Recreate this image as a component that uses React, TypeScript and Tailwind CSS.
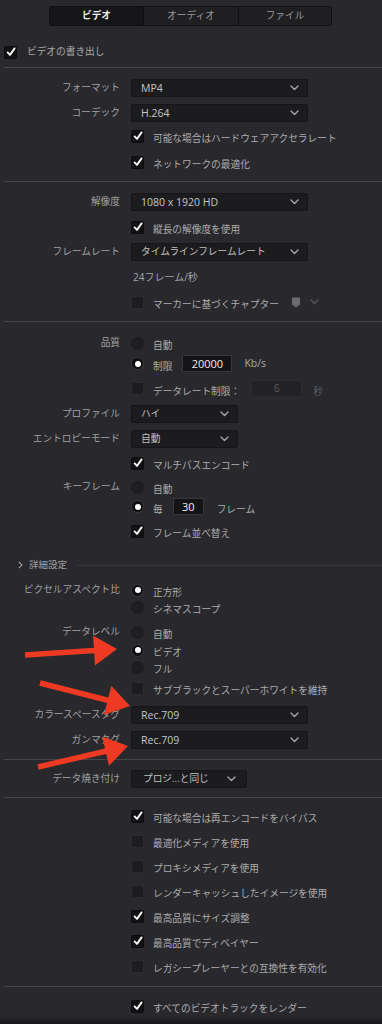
import React from "react";

function Check({ checked }: { checked?: boolean }) {
  return (
    <div
      className={
        checked
          ? "w-[13px] h-[13px] shrink-0 rounded-[2px] bg-[#121214] border border-[#0c0c0e] flex items-center justify-center"
          : "w-[13px] h-[13px] shrink-0 rounded-[2px] bg-[#1d1d20] border border-[#2c2c30]"
      }
    >
      {checked && (
        <svg width="10" height="10" viewBox="0 0 10 10">
          <path d="M1.6 5.4 L4 7.9 L8.6 1.4" stroke="#f4f4f4" strokeWidth="1.9" fill="none" strokeLinecap="round" strokeLinejoin="round" />
        </svg>
      )}
    </div>
  );
}

function Radio({ on }: { on?: boolean }) {
  return (
    <div
      className={
        on
          ? "w-[13px] h-[13px] shrink-0 rounded-full bg-[#0f0f11] border border-[#3a3a3f] flex items-center justify-center"
          : "w-[13px] h-[13px] shrink-0 rounded-full bg-[#1e1e21]"
      }
    >
      {on && <div className="w-[6px] h-[6px] rounded-full bg-white" />}
    </div>
  );
}

function Chevron({ color = "#a0a0a0" }: { color?: string }) {
  return (
    <svg width="9" height="6" viewBox="0 0 9 6">
      <path d="M1 1 L4.5 4.6 L8 1" stroke={color} strokeWidth="1.4" fill="none" strokeLinecap="round" strokeLinejoin="round" />
    </svg>
  );
}

function Dropdown({ w, value }: { w: string; value: string }) {
  return (
    <div className={`${w} h-[18px] bg-[#1c1c1f] border border-[#151517] rounded-[2px] flex items-center justify-between pl-[9px] pr-[8px]`}>
      <span className="text-[10.5px] leading-none text-[#c6c6c6] whitespace-nowrap">{value}</span>
      <Chevron />
    </div>
  );
}

function Row({ mt, h, label, children }: { mt: string; h: string; label?: string; children?: React.ReactNode }) {
  return (
    <div className={`flex items-center ${mt} ${h}`}>
      <div className="w-[120px] shrink-0 text-right text-[#a0a0a0] text-[9.7px] leading-none whitespace-nowrap">{label}</div>
      <div className="ml-[11px] flex items-center">{children}</div>
    </div>
  );
}

function T({ children, c = "text-[#acacac]" }: { children: React.ReactNode; c?: string }) {
  return <span className={`${c} text-[9.7px] leading-none whitespace-nowrap`}>{children}</span>;
}

function Sep({ mt }: { mt: string }) {
  return <div className={`${mt} h-px ml-[4px] bg-[#45454b]`} />;
}

function arrowPoints(x1: number, y1: number, x2: number, y2: number, sw = 5.5, hl = 23, hw = 30) {
  const dx = x2 - x1;
  const dy = y2 - y1;
  const L = Math.sqrt(dx * dx + dy * dy);
  const ux = dx / L;
  const uy = dy / L;
  const px = -uy;
  const py = ux;
  const bx = x2 - ux * hl;
  const by = y2 - uy * hl;
  const pts = [
    [x1 + (px * sw) / 2, y1 + (py * sw) / 2],
    [bx + (px * sw) / 2, by + (py * sw) / 2],
    [bx + (px * hw) / 2, by + (py * hw) / 2],
    [x2, y2],
    [bx - (px * hw) / 2, by - (py * hw) / 2],
    [bx - (px * sw) / 2, by - (py * sw) / 2],
    [x1 - (px * sw) / 2, y1 - (py * sw) / 2],
  ];
  return pts.map((p) => `${p[0].toFixed(1)},${p[1].toFixed(1)}`).join(" ");
}

export default function App() {
  return (
    <div className="relative w-[382px] h-[1024px] overflow-hidden bg-[#28282d] flex flex-col [font-family:'Open_Sans','Noto_Sans_CJK_JP',sans-serif]">
      {/* Tabs */}
      <div className="mt-[6px] ml-[49px] w-[283px] h-[20px] flex bg-[#1f1f22] border border-[#111113] rounded-[2px]">
        <div className="w-[94px] h-full bg-[#161618] flex items-center justify-center border-r border-[#0e0e10]">
          <span className="text-[9.7px] leading-none text-[#f0f0f0] font-semibold">ビデオ</span>
        </div>
        <div className="w-[95px] h-full flex items-center justify-center border-r border-[#121214]">
          <span className="text-[9.7px] leading-none text-[#9a9a9e]">オーディオ</span>
        </div>
        <div className="flex-1 h-full flex items-center justify-center">
          <span className="text-[9.7px] leading-none text-[#9a9a9e]">ファイル</span>
        </div>
      </div>

      <div className="mt-[19px] h-[14px] flex items-center pl-[4px]">
        <Check checked />
        <span className="ml-[10px] text-[9.7px] leading-none text-[#a8a8a8]">ビデオの書き出し</span>
      </div>
      <Sep mt="mt-[8px]" />

      <Row mt="mt-[11px]" h="h-[18px]" label="フォーマット">
        <Dropdown w="w-[177px]" value="MP4" />
      </Row>
      <Row mt="mt-[7px]" h="h-[18px]" label="コーデック">
        <Dropdown w="w-[177px]" value="H.264" />
      </Row>
      <Row mt="mt-[7px]" h="h-[14px]">
        <Check checked />
        <span className="ml-[9px]"><T>可能な場合はハードウェアアクセラレート</T></span>
      </Row>
      <Row mt="mt-[12px]" h="h-[14px]">
        <Check checked />
        <span className="ml-[9px]"><T>ネットワークの最適化</T></span>
      </Row>
      <Sep mt="mt-[12px]" />

      <Row mt="mt-[11px]" h="h-[18px]" label="解像度">
        <Dropdown w="w-[177px]" value="1080 x 1920 HD" />
      </Row>
      <Row mt="mt-[9px]" h="h-[14px]">
        <Check checked />
        <span className="ml-[9px]"><T>縦長の解像度を使用</T></span>
      </Row>
      <Row mt="mt-[9px]" h="h-[18px]" label="フレームレート">
        <div className="w-[177px] h-[18px] bg-[#1c1c1f] border border-[#151517] rounded-[2px] flex items-center justify-between pl-[9px] pr-[8px]">
          <span className="text-[9.7px] leading-none text-[#c0c0c0] whitespace-nowrap">タイムラインフレームレート</span>
          <Chevron />
        </div>
      </Row>
      <Row mt="mt-[9px]" h="h-[14px]">
        <span className="ml-[2px] text-[10px] leading-none text-[#a4a4a4]">24フレーム/秒</span>
      </Row>
      <Row mt="mt-[11px]" h="h-[14px]">
        <Check />
        <span className="ml-[9px]"><T>マーカーに基づくチャプター</T></span>
        <svg className="ml-[12px]" width="10" height="11" viewBox="0 0 10 11">
          <path d="M1 1.5 Q1 0.5 2 0.5 L8 0.5 Q9 0.5 9 1.5 L9 7.5 L5 10.5 L1 7.5 Z" fill="#6a6a70" />
        </svg>
        <span className="ml-[9px]"><Chevron color="#55555b" /></span>
      </Row>
      <Sep mt="mt-[12px]" />

      <Row mt="mt-[14px]" h="h-[14px]" label="品質">
        <Radio />
        <span className="ml-[9px]"><T>自動</T></span>
      </Row>
      <Row mt="mt-[5px]" h="h-[17px]">
        <Radio on />
        <span className="ml-[9px]"><T>制限</T></span>
        <div className="ml-[10px] w-[50px] h-[17px] bg-[#141416] border border-[#37373c] rounded-[1px] flex items-center justify-center">
          <span className="text-[11px] leading-none text-[#eeeeee]">20000</span>
        </div>
        <span className="ml-[12px] text-[10.5px] leading-none text-[#a8a8a8]">Kb/s</span>
      </Row>
      <Row mt="mt-[8px]" h="h-[17px]">
        <Check />
        <span className="ml-[9px]"><T>データレート制限：</T></span>
        <div className="ml-[11px] w-[51px] h-[17px] bg-[#222225] border border-[#2c2c30] rounded-[1px] flex items-center justify-center">
          <span className="text-[10.5px] leading-none text-[#5e5e62]">6</span>
        </div>
        <span className="ml-[11px]"><T c="text-[#5e5e62]">秒</T></span>
      </Row>
      <Row mt="mt-[8px]" h="h-[18px]" label="プロファイル">
        <div className="w-[107px] h-[18px] bg-[#1c1c1f] border border-[#151517] rounded-[2px] flex items-center justify-between pl-[9px] pr-[8px]">
          <span className="text-[9.7px] leading-none text-[#c0c0c0]">ハイ</span>
          <Chevron />
        </div>
      </Row>
      <Row mt="mt-[7px]" h="h-[18px]" label="エントロピーモード">
        <div className="w-[107px] h-[18px] bg-[#1c1c1f] border border-[#151517] rounded-[2px] flex items-center justify-between pl-[9px] pr-[8px]">
          <span className="text-[9.7px] leading-none text-[#c0c0c0]">自動</span>
          <Chevron />
        </div>
      </Row>
      <Row mt="mt-[8px]" h="h-[14px]">
        <Check checked />
        <span className="ml-[9px]"><T>マルチパスエンコード</T></span>
      </Row>
      <Row mt="mt-[10px]" h="h-[14px]" label="キーフレーム">
        <Radio />
        <span className="ml-[9px]"><T>自動</T></span>
      </Row>
      <Row mt="mt-[4px]" h="h-[17px]">
        <Radio on />
        <span className="ml-[9px]"><T>毎</T></span>
        <div className="ml-[10px] w-[31px] h-[17px] bg-[#141416] border border-[#37373c] rounded-[1px] flex items-center justify-center">
          <span className="text-[11px] leading-none text-[#eeeeee]">30</span>
        </div>
        <span className="ml-[13px]"><T>フレーム</T></span>
      </Row>
      <Row mt="mt-[9px]" h="h-[14px]">
        <Check checked />
        <span className="ml-[9px]"><T>フレーム並べ替え</T></span>
      </Row>

      {/* 詳細設定 */}
      <div className="mt-[20px] h-[14px] flex items-center pl-[18px]">
        <svg width="5" height="8" viewBox="0 0 5 8">
          <path d="M0.8 0.8 L4 4 L0.8 7.2" stroke="#a0a0a0" strokeWidth="1.1" fill="none" />
        </svg>
        <span className="ml-[6px] text-[9.5px] leading-none text-[#a0a0a0]">詳細設定</span>
        <div className="ml-[10px] flex-1 h-px bg-[#37373c]" />
      </div>

      <Row mt="mt-[11px]" h="h-[14px]" label="ピクセルアスペクト比">
        <Radio on />
        <span className="ml-[9px]"><T>正方形</T></span>
      </Row>
      <Row mt="mt-[3px]" h="h-[14px]">
        <Radio />
        <span className="ml-[9px]"><T>シネマスコープ</T></span>
      </Row>
      <Row mt="mt-[11px]" h="h-[14px]" label="データレベル">
        <Radio />
        <span className="ml-[9px]"><T>自動</T></span>
      </Row>
      <Row mt="mt-[4px]" h="h-[14px]">
        <Radio on />
        <span className="ml-[9px]"><T>ビデオ</T></span>
      </Row>
      <Row mt="mt-[3px]" h="h-[14px]">
        <Radio />
        <span className="ml-[9px]"><T>フル</T></span>
      </Row>
      <Row mt="mt-[7px]" h="h-[14px]">
        <Check />
        <span className="ml-[9px]"><T>サブブラックとスーパーホワイトを維持</T></span>
      </Row>
      <Row mt="mt-[11px]" h="h-[18px]" label="カラースペースタグ">
        <Dropdown w="w-[177px]" value="Rec.709" />
      </Row>
      <Row mt="mt-[7px]" h="h-[18px]" label="ガンマタグ">
        <Dropdown w="w-[177px]" value="Rec.709" />
      </Row>
      <Sep mt="mt-[10px]" />

      <Row mt="mt-[10px]" h="h-[18px]" label="データ焼き付け">
        <div className="w-[116px] h-[18px] bg-[#1c1c1f] border border-[#151517] rounded-[2px] flex items-center justify-between pl-[11px] pr-[10px]">
          <span className="text-[9.7px] leading-none text-[#c0c0c0] whitespace-nowrap">プロジ...と同じ</span>
          <Chevron />
        </div>
      </Row>
      <Sep mt="mt-[9px]" />

      <Row mt="mt-[11px]" h="h-[14px]">
        <Check checked />
        <span className="ml-[9px]"><T>可能な場合は再エンコードをバイパス</T></span>
      </Row>
      <Row mt="mt-[11px]" h="h-[14px]">
        <Check />
        <span className="ml-[9px]"><T>最適化メディアを使用</T></span>
      </Row>
      <Row mt="mt-[11px]" h="h-[14px]">
        <Check />
        <span className="ml-[9px]"><T>プロキシメディアを使用</T></span>
      </Row>
      <Row mt="mt-[11px]" h="h-[14px]">
        <Check />
        <span className="ml-[9px]"><T>レンダーキャッシュしたイメージを使用</T></span>
      </Row>
      <Row mt="mt-[11px]" h="h-[14px]">
        <Check checked />
        <span className="ml-[9px]"><T>最高品質にサイズ調整</T></span>
      </Row>
      <Row mt="mt-[11px]" h="h-[14px]">
        <Check checked />
        <span className="ml-[9px]"><T>最高品質でディベイヤー</T></span>
      </Row>
      <Row mt="mt-[11px]" h="h-[14px]">
        <Check />
        <span className="ml-[9px]"><T>レガシープレーヤーとの互換性を有効化</T></span>
      </Row>
      <Sep mt="mt-[13px]" />
      <Row mt="mt-[12px]" h="h-[14px]">
        <Check checked />
        <span className="ml-[9px]"><T>すべてのビデオトラックをレンダー</T></span>
      </Row>

      <div className="mt-auto h-[7px] bg-gradient-to-b from-[#26262b] to-[#18181b]" />

      {/* Red annotation arrows */}
      <svg className="absolute inset-0 pointer-events-none" width="382" height="1024" viewBox="0 0 382 1024">
        <polygon points={arrowPoints(25, 655, 117, 649)} fill="#ee3a22" />
        <polygon points={arrowPoints(40, 683, 130, 706)} fill="#ee3a22" />
        <polygon points={arrowPoints(38, 767, 128, 746)} fill="#ee3a22" />
      </svg>
    </div>
  );
}
